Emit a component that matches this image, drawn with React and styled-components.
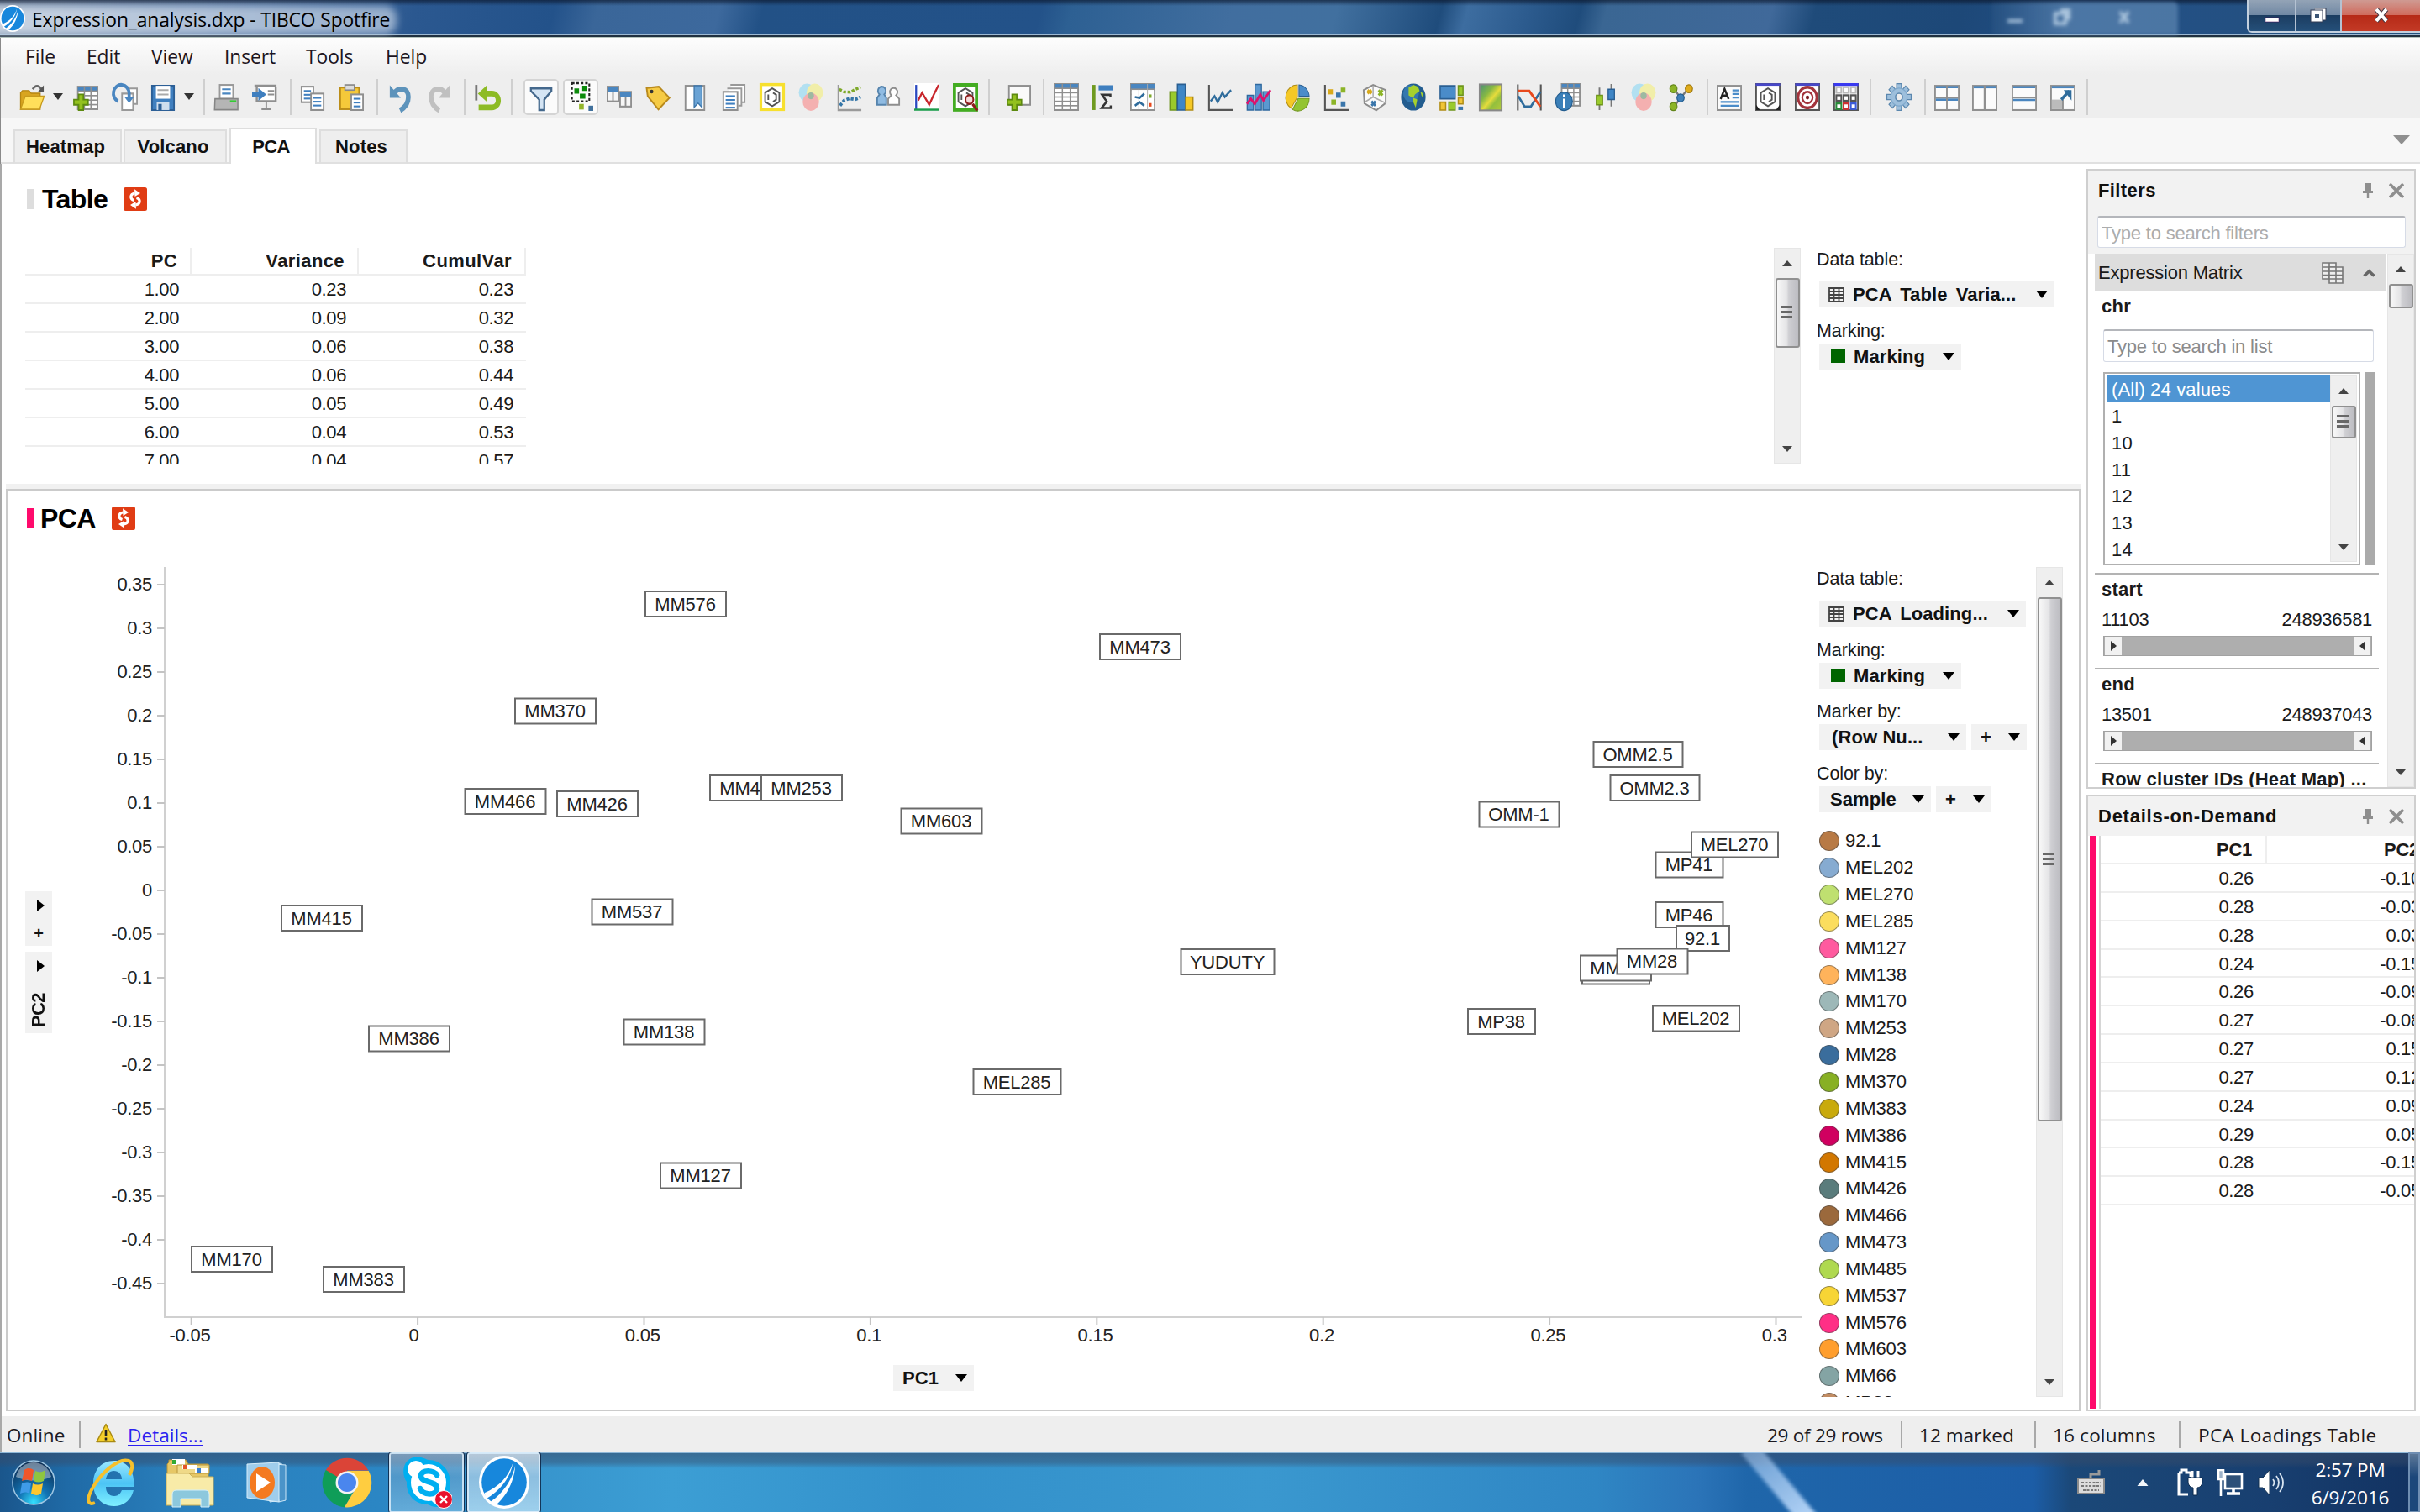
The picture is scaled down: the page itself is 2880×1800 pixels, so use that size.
import React from "react";
import styled, { createGlobalStyle, css } from "styled-components";

const sans = `"Liberation Sans", Arial, sans-serif`;
const ui = `"Open Sans", "Segoe UI", sans-serif`;

const Global = createGlobalStyle`
  * { box-sizing: border-box; }
  html, body { margin: 0; padding: 0; background: #fff; }
  body { font-family: ${sans}; font-size: 22px; color: #1a1a1a; overflow: hidden; }
`;

const Screen = styled.div`
  width: 2880px;
  height: 1800px;
  display: flex;
  flex-direction: column;
  background: #fff;
  overflow: hidden;
`;

/* ---------- title bar ---------- */

const TitleBar = styled.header`
  position: relative;
  flex: none;
  height: 45px;
  display: flex;
  align-items: flex-start;
  overflow: hidden;
  border-bottom: 1px solid #b5c4bd;
  box-shadow: inset 0 -2px 0 #203040, inset 0 -3px 0 #9db9d3;
  background:
    linear-gradient(180deg, rgba(10, 20, 40, 0.65) 0, rgba(10, 20, 40, 0) 7px),
    linear-gradient(105deg, #7f93ad 0, #5b7ba6 240px, #2b5890 480px, #23528a 640px, #3a6699 690px, #3d699d 830px,
      #225186 880px, #235289 1200px, #2d6093 1235px, #416e9f 1420px, #41709f 1540px, #1f4c7c 1660px, #3d6da0 1690px,
      #2c5b8e 1760px, #1f4c7c 1820px, #3a6693 1850px, #40699a 2040px, #1f4b7a 2090px, #1d4878 2260px, #235087 2400px, #245079 2880px);
`;
const TitleGlow = styled.div`
  position: absolute;
  left: -20px;
  top: 7px;
  width: 492px;
  height: 34px;
  border-radius: 14px;
  background: linear-gradient(90deg, rgba(225, 233, 243, 0.75), rgba(190, 206, 226, 0.72));
  filter: blur(5px);
`;
const TitleLabel = styled.div`
  position: relative;
  display: flex;
  align-items: center;
  gap: 8px;
  height: 45px;
  padding-bottom: 1px;
  font: 22.8px/44px ${ui};
  letter-spacing: -0.1px;
  color: #000;
  span { padding-top: 3px; }
`;
const TitleLogo = styled.svg`
  width: 30px;
  height: 32px;
  margin-top: -1px;
`;
const GhostWindow = styled.div`
  position: absolute;
  left: 2370px;
  top: 2px;
  width: 222px;
  height: 40px;
  border-radius: 0 6px 0 0;
  background: linear-gradient(90deg, rgba(90, 130, 170, 0.1), rgba(110, 150, 190, 0.55) 40%);
  filter: blur(2px);
`;
const WindowButtons = styled.div`
  position: relative;
  margin-left: auto;
  display: flex;
  width: 206px;
  height: 39px;
  border: 2px solid #c3d0de;
  border-top: 0;
  border-right: 0;
  border-radius: 0 0 0 6px;
  overflow: hidden;
`;
const WindowButton = styled.div`
  width: ${(p) => p.$w}px;
  display: grid;
  place-items: center;
  border-right: ${(p) => (p.$close ? 0 : "2px solid #b4c2d2")};
  background: ${(p) =>
    p.$close
      ? "linear-gradient(180deg, #cf9a92 0, #d06c5e 48%, #b62a17 50%, #c33a26 100%)"
      : "linear-gradient(180deg, #93a3b6 0, #7189a4 48%, #1c3d61 50%, #25507a 100%)"};
  svg { display: block; }
`;

/* ---------- menu, toolbar, tabs ---------- */

const MenuBar = styled.nav`
  flex: none;
  height: 44px;
  padding-left: 29px;
  display: flex;
  gap: 36px;
  border-left: 1px solid #8a8a8a;
  background: linear-gradient(180deg, #fdfdfd, #eeeeee);
  font: 22.8px/46px ${ui};
  letter-spacing: -0.05px;
  color: #1c1420;
`;
const MenuItem = styled.span`
  width: ${(p) => p.$w}px;
  white-space: nowrap;
`;
const ToolBar = styled.div`
  flex: none;
  height: 52px;
  display: flex;
  align-items: center;
  border-left: 1px solid #8a8a8a;
  background: #eeeeee;
`;
const ToolCell = styled.div`
  flex: none;
  width: ${(p) => (p.$pressed ? 42 : 32)}px;
  height: ${(p) => (p.$pressed ? 43 : 34)}px;
  margin-left: ${(p) => p.$gap ?? 14}px;
  display: grid;
  place-items: center;
  ${(p) =>
    p.$pressed &&
    css`
      background: #fbfbfb;
      border: 2px solid #d4d4d4;
      border-radius: 5px;
    `}
`;
const ToolSvg = styled.svg`
  width: 30px;
  height: 33px;
  overflow: visible;
`;
const ToolArrow = styled.div`
  flex: none;
  width: 12px;
  margin: 0 -1px 0 ${(p) => (p.$gap ?? 10) - 1}px;
  border: 6px solid transparent;
  border-top: 8px solid #333;
  border-bottom: 0;
`;
const ToolSep = styled.div`
  flex: none;
  width: 2px;
  height: 43px;
  margin-left: ${(p) => p.$gap ?? 14}px;
  background: #cfcfcf;
`;
const TabBar = styled.div`
  flex: none;
  height: 54px;
  padding: 0 38px 0 15px;
  display: flex;
  align-items: flex-end;
  gap: 2px;
  border-left: 1px solid #8a8a8a;
  background: #f7f7f7;
  box-shadow: inset 0 -2px 0 #e0e0e0;
`;
const Tab = styled.div`
  width: ${(p) => p.$w}px;
  height: ${(p) => (p.$active ? 43 : 41)}px;
  margin: ${(p) => (p.$active ? "0 1px" : "0")};
  border: 2px solid #dedede;
  border-bottom: ${(p) => (p.$active ? "0" : "2px solid #e0e0e0")};
  background: ${(p) => (p.$active ? "#fff" : "#eeeeee")};
  text-align: center;
  font: bold 22px/37px ${sans};
  letter-spacing: ${(p) => (p.$active ? "-0.6px" : "0.15px")};
  color: #111;
  padding: ${(p) => (p.$active ? 2 : 0)}px 5px 0 0;
`;
const TabMenu = styled.div`
  margin: 0 -26px 23px auto;
  border: 10px solid transparent;
  border-top: 11px solid #8f8f8f;
  border-bottom: 0;
`;

/* ---------- page ---------- */

const Page = styled.main`
  flex: none;
  height: 1491px;
  display: flex;
  gap: 7px;
  border-left: 2px solid #a9a9a9;
  background: #fff;
`;
const LeftPane = styled.div`
  width: 2474px;
  height: 1485px;
  padding-left: 5px;
  display: flex;
  flex-direction: column;
`;
const TablePanel = styled.section`
  height: 381px;
  padding: 28px 0 0 23px;
  overflow: hidden;
`;
const Divider = styled.div`
  height: 6px;
  background: #f1f1f1;
`;
const PlotPanel = styled.section`
  height: 1098px;
  padding: 19px 0 0 21px;
  border: 2px solid #cbcbcb;
  overflow: hidden;
`;
const PanelTitle = styled.div`
  display: flex;
  align-items: center;
  height: 28px;
  padding-left: 2px;
  font: bold 32px/30px ${sans};
  letter-spacing: -0.6px;
  color: #000;
  &::before {
    content: "";
    width: 8px;
    height: 24px;
    margin-right: ${(p) => (p.$active ? 8 : 10)}px;
    background: ${(p) => (p.$active ? "#ff0a6c" : "#dddddd")};
  }
  svg { margin-left: 19px; }
`;
const PanelBody = styled.div`
  display: flex;
  margin-top: 44px;
  height: ${(p) => p.$h}px;
`;
const DataTable = styled.div`
  width: 596px;
  overflow: hidden;
`;
const DataRow = styled.div`
  display: grid;
  grid-template-columns: 198px 199px 199px;
  height: ${(p) => (p.$head ? 33 : 34)}px;
  line-height: ${(p) => (p.$head ? 32 : 33)}px;
  border-bottom: 2px solid #eeeeee;
  font-weight: ${(p) => (p.$head ? "bold" : "normal")};
  span {
    text-align: right;
    padding-right: ${(p) => (p.$head ? 15 : 15)}px;
    border-right: ${(p) => (p.$head ? "2px solid #eeeeee" : "0")};
    letter-spacing: ${(p) => (p.$head ? "0.4px" : "-0.4px")};
  }
`;
const Filler = styled.div`
  flex: 1;
`;

/* ---------- scroll bar ---------- */

const Track = styled.div`
  flex: none;
  width: 32px;
  display: flex;
  flex-direction: column;
  align-items: center;
  background: #efefef;
  border: 1px solid #e6e6e6;
`;
const TrackArrow = styled.div`
  flex: none;
  height: ${(p) => (p.$down ? 34 : 35)}px;
  display: flex;
  align-items: center;
  &::before {
    content: "";
    border: 6.5px solid transparent;
    ${(p) => (p.$down ? "border-top: 7px solid #444; border-bottom: 0;" : "border-bottom: 7px solid #444; border-top: 0;")}
  }
`;
const Thumb = styled.div`
  flex: none;
  width: 29px;
  height: ${(p) => p.$h}px;
  padding-bottom: 2px;
  display: flex;
  flex-direction: column;
  align-items: center;
  justify-content: center;
  gap: 3px;
  border: 2px solid #909090;
  border-radius: 3px;
  background: linear-gradient(90deg, #f8f8f8 0, #e4e4e6 45%, #cfcfd3 55%, #bcbcc1 100%);
  i {
    width: 14px;
    height: 3px;
    margin-right: 2px;
    background: #686868;
  }
`;
function ScrollBar({ thumb, grip = true }) {
  return (
    <Track>
      <TrackArrow />
      <Thumb $h={thumb}>{grip && <><i /><i /><i /></>}</Thumb>
      <Filler />
      <TrackArrow $down />
    </Track>
  );
}

/* ---------- side legend ---------- */

const Side = styled.div`
  width: ${(p) => p.$w}px;
  padding-left: ${(p) => p.$pl}px;
  overflow: hidden;
`;
const SideLabel = styled.div`
  height: 26px;
  margin: ${(p) => (p.$first ? "0 0 14px -3px" : "13.5px 0 3px -3px")};
  line-height: 28px;
  font-size: 21.5px;
  letter-spacing: -0.1px;
`;
const ChipRow = styled.div`
  display: flex;
  gap: 6px;
`;
const Chip = styled.div`
  width: ${(p) => p.$w}px;
  height: 31px;
  padding: 0 8px 0 ${(p) => p.$pad ?? 11}px;
  display: flex;
  align-items: center;
  justify-content: space-between;
  background: #f2f2f2;
  font: bold 22px/31px ${sans};
  letter-spacing: 0.1px;
  word-spacing: ${(p) => p.$ws ?? 0}px;
  color: #111;
  white-space: nowrap;
  span { display: flex; align-items: center; gap: 10px; }
`;
const Caret = styled.div`
  border: 7px solid transparent;
  border-top: 9px solid #000;
  border-bottom: 0;
`;
const Swatch = styled.i`
  width: 17px;
  height: 16px;
  margin-left: 3px;
  background: #006400;
`;
const Legend = styled.div`
  margin-top: 19px;
`;
const LegendRow = styled.div`
  display: flex;
  align-items: center;
  height: 31.85px;
  gap: 7px;
  letter-spacing: -0.1px;
  &::before {
    content: "";
    width: 22px;
    height: 22px;
    border-radius: 50%;
    background: ${(p) => p.$c};
    border: 1px solid rgba(70, 70, 70, 0.55);
  }
`;

/* ---------- chart ---------- */

const PlotArea = styled.div`
  position: relative;
  width: 2115px;
  height: 988px;
  svg { display: block; overflow: visible; }
`;
const AxisChip = styled.div`
  position: absolute;
  left: 1033px;
  top: 950px;
`;
const VerticalChips = styled.div`
  position: absolute;
  left: 0;
  top: 386px;
  width: 32px;
  display: flex;
  flex-direction: column;
  gap: 7px;
`;
const VerticalChip = styled.div`
  height: ${(p) => p.$h}px;
  padding: 10px 0 7px;
  display: flex;
  flex-direction: column;
  align-items: center;
  justify-content: space-between;
  background: #f2f2f2;
  font: bold 22px/24px ${sans};
  color: #111;
  &::before {
    content: "";
    margin-left: 4px;
    border: 7px solid transparent;
    border-left: 9px solid #000;
    border-right: 0;
  }
  span { writing-mode: vertical-rl; transform: rotate(180deg); letter-spacing: -0.5px; }
  b { font-size: 20px; line-height: 16px; }
`;

/* ---------- right panels ---------- */

const RightPane = styled.aside`
  width: 392px;
  padding-top: 6px;
  display: flex;
  flex-direction: column;
  gap: 7px;
`;
const Tool = styled.section`
  height: ${(p) => p.$h}px;
  border: 2px solid #cfcfcf;
  overflow: hidden;
  background: #fff;
`;
const ToolHead = styled.div`
  height: ${(p) => p.$h}px;
  background: #f2f2f2;
`;
const ToolTitle = styled.div`
  display: flex;
  align-items: center;
  justify-content: space-between;
  height: 47px;
  padding: 0 12px;
  font: bold 22px/46px ${sans};
  letter-spacing: ${(p) => p.$ls}px;
  color: #111;
  span { display: flex; gap: 19px; align-items: center; }
`;
const Search = styled.div`
  width: ${(p) => p.$w}px;
  height: ${(p) => p.$h ?? 38}px;
  margin: ${(p) => p.$m};
  padding-left: 4px;
  border: 1px solid #d6dbe6;
  border-top: 2px solid #b4b6bb;
  border-radius: 3px;
  background: #fff;
  font: 22px/37px ${sans};
  letter-spacing: -0.2px;
  color: ${(p) => p.$c};
`;
const FilterBody = styled.div`
  display: flex;
  gap: 2px;
  height: 635px;
  padding-left: 8px;
`;
const FilterList = styled.div`
  width: 346px;
  overflow: hidden;
`;
const GroupHead = styled.div`
  height: 45px;
  padding: 0 12px 0 4px;
  display: flex;
  align-items: center;
  background: #dddddd;
  letter-spacing: -0.2px;
  svg:first-of-type { margin-left: auto; }
  svg + svg { margin-left: 23px; }
`;
const FilterName = styled.div`
  padding-left: 8px;
  height: 36px;
  line-height: 36px;
  font-weight: bold;
  letter-spacing: 0.25px;
  white-space: nowrap;
`;
const ListRow = styled.div`
  display: flex;
  gap: 6px;
  margin: 12px 0 0 10px;
  height: 230px;
`;
const ListBox = styled.div`
  width: 306px;
  padding: 2px;
  display: flex;
  border: 2px solid #b0b0b0;
`;
const ListItems = styled.div`
  width: 266px;
  overflow: hidden;
`;
const ListItem = styled.div`
  height: 31.85px;
  padding-left: 6px;
  line-height: 33px;
  letter-spacing: 0.15px;
  background: ${(p) => (p.$on ? "#4f95d3" : "none")};
  color: ${(p) => (p.$on ? "#fff" : "#1a1a1a")};
`;
const ListSide = styled.div`
  width: 12px;
  background: #aaaaaa;
`;
const FilterRule = styled.div`
  width: 338px;
  height: 2px;
  margin-top: ${(p) => p.$mt}px;
  background: #b3b3b3;
`;
const RangeValues = styled.div`
  display: flex;
  justify-content: space-between;
  width: 330px;
  height: 36px;
  padding-left: 8px;
  line-height: 36px;
  letter-spacing: -0.3px;
`;
const RangeBar = styled.div`
  width: 320px;
  height: 24px;
  margin: 1px 0 0 10px;
  padding: 0 1px;
  display: flex;
  justify-content: space-between;
  border: 1px solid #a2a2a2;
  background: #aeaeae;
`;
const RangeHandle = styled.div`
  width: 20px;
  display: grid;
  place-items: center;
  background: #f1f1f1;
  &::before {
    content: "";
    border: 6px solid transparent;
    ${(p) => (p.$right ? "border-right: 7px solid #333; border-left: 0;" : "border-left: 7px solid #333; border-right: 0;")}
  }
`;
const DetailsBody = styled.div`
  display: flex;
  height: 682px;
  padding-left: 2px;
  &::before {
    content: "";
    width: 8px;
    margin-right: 3px;
    background: #ff0a6c;
  }
`;
const DetailsTable = styled.div`
  flex: 1;
  border-left: 2px solid #d6d6d6;
  overflow: hidden;
`;
const DetailsRow = styled.div`
  display: grid;
  grid-template-columns: 198px 199px;
  height: ${(p) => (p.$head ? 34 : 33.85)}px;
  line-height: 34px;
  border-bottom: 2px solid #eeeeee;
  font-weight: ${(p) => (p.$head ? "bold" : "normal")};
  span {
    text-align: right;
    padding-right: 16px;
    border-right: ${(p) => (p.$head ? "2px solid #eeeeee" : "0")};
    letter-spacing: -0.3px;
  }
`;

/* ---------- status bar ---------- */

const StatusBar = styled.footer`
  flex: none;
  height: 42px;
  padding: 3px 0 0 6px;
  display: flex;
  align-items: center;
  border-left: 2px solid #a9a9a9;
  background: #eeeeee;
  font: 22.6px/39px ${ui};
  color: #1c1a22;
  a { width: 88px; color: #2b1ff0; text-decoration: underline; text-decoration-thickness: 2px; text-underline-offset: 3px; }
  svg { margin: 0 14px 6px 18px; }
`;
const StatusSep = styled.i`
  width: 2px;
  height: 32px;
  margin-bottom: 2px;
  background: #a8a8a8;
`;
const StatusText = styled.span`
  width: ${(p) => p.$w}px;
  padding-left: ${(p) => p.$pl ?? 0}px;
  letter-spacing: ${(p) => p.$ls ?? 0}px;
  white-space: nowrap;
`;

/* ---------- taskbar ---------- */

const TaskBar = styled.div`
  position: relative;
  flex: none;
  height: 72px;
  display: flex;
  align-items: center;
  overflow: hidden;
  border-top: 1px solid #16334f;
  box-shadow: inset 0 1px 0 #8fb8d8;
  background:
    linear-gradient(180deg, rgba(55, 75, 105, 0.6) 0, rgba(55, 75, 105, 0.45) 12px, rgba(55, 75, 105, 0) 19px),
    linear-gradient(90deg, #1a568c 0, #1f6aa6 80px, #2a80bd 220px, #2b86c4 450px, #3795cd 640px, #3c9ed4 800px, #3391cb 1100px,
      #3a98cf 1500px, #2f86c4 1900px, #2b74b8 2020px, #1f66aa 2080px, #1c5da6 2420px, #1b4878 2465px, #183f70 2700px, #123261 2880px);
`;
const Streak = styled.div`
  position: absolute;
  left: 2108px;
  top: -20px;
  width: 22px;
  height: 120px;
  background: linear-gradient(180deg, rgba(170, 205, 245, 0.5), #b9d8fa);
  transform: rotate(-40deg);
  filter: blur(2px);
`;
const TaskIcon = styled.div`
  flex: none;
  width: ${(p) => p.$w}px;
  height: ${(p) => p.$h}px;
  margin-left: ${(p) => p.$gap}px;
  svg { display: block; width: 100%; height: 100%; }
`;
const TaskButton = styled.div`
  flex: none;
  width: ${(p) => p.$w}px;
  height: 72px;
  margin-left: ${(p) => p.$gap}px;
  display: grid;
  place-items: center;
  border: 2px solid rgba(225, 240, 252, 0.8);
  outline: 1px solid rgba(10, 30, 60, 0.8);
  border-radius: 3px;
  background: ${(p) =>
    p.$active
      ? "linear-gradient(180deg, rgba(225,232,240,.75), rgba(170,205,230,.75) 40%, rgba(175,218,242,.85))"
      : "linear-gradient(180deg, rgba(170,190,212,.6), rgba(110,165,205,.55) 40%, rgba(135,195,230,.6))"};
`;
const Tray = styled.div`
  position: relative;
  margin-left: auto;
  display: flex;
  align-items: center;
  height: 72px;
`;
const TrayIcon = styled.svg`
  flex: none;
  margin-right: ${(p) => p.$gap}px;
`;
const Clock = styled.div`
  width: 116px;
  padding-top: 3px;
  text-align: center;
  color: #fff;
  font: 22.6px/33px ${ui};
  letter-spacing: -0.2px;
`;
const ShowDesktop = styled.div`
  width: 14px;
  height: 72px;
  margin-left: 11px;
  border: 2px solid #6f8eb2;
  background: linear-gradient(180deg, #5d7898, #1c477a 40%);
`;

/* ---------- drawings ---------- */

const Refresh = () => (
  <svg width="28" height="28" viewBox="0 0 28 28">
    <rect width="28" height="28" rx="2.500" fill="#e03c14" />
    <path d="M12.500 15.500C7.500 14 7.500 8 13.500 7" fill="none" stroke="#fff" strokeWidth="3.200" />
    <path d="M13 2.200l7 4.800-6.500 4z" fill="#fff" />
    <path d="M15.500 12.500c5 1.500 5 7.500-1 8.500" fill="none" stroke="#fff" strokeWidth="3.200" />
    <path d="M15 25.800l-7-4.800 6.500-4z" fill="#fff" />
  </svg>
);
const MiniTable = () => (
  <svg width="19" height="18" viewBox="0 0 19 18" fill="none" stroke="#444" strokeWidth="1.800">
    <path d="M1 1h17v16H1zM1 5h17M1 9h17M1 13h17M6.500 1v16M12.500 1v16" />
  </svg>
);
const Pin = () => (
  <svg width="12" height="18" viewBox="0 0 12 18" fill="#8e8e8e">
    <path d="M2 0h8v9h2v3H7.200v6H4.800v-6H0V9h2z" />
  </svg>
);
const Close = () => (
  <svg width="18" height="18" viewBox="0 0 18 18" stroke="#8e8e8e" strokeWidth="3.600">
    <path d="M1 1l16 16M17 1L1 17" />
  </svg>
);
const Spotfire = () => (
  <>
    <circle cx="16" cy="16" r="16" fill="#fff" />
    <circle cx="16" cy="16" r="14.300" fill="#1787dc" />
    <path d="M3.500 22.500C13 19 19 12 21.500 4.500 20 13 14 21 4.500 26zM7 28c8-5 14-13 16-22-.5 9-5 18-12.500 24z" fill="#fff" />
  </>
);
const Grid = ({ x = 1, y = 1, w = 14, h = 14, rows = 4, cols = 3, head = "#4a86c0" }) => (
  <>
    <rect x={x} y={y} width={w} height={h} fill="#fff" stroke="#8f8f8f" />
    <rect x={x} y={y} width={w} height={h / (rows + 1)} fill={head} />
    {Array.from({ length: rows }, (_, i) => (
      <path key={i} d={`M${x} ${y + ((i + 1) * h) / (rows + 1)}h${w}`} stroke="#8f8f8f" strokeWidth=".8" />
    ))}
    {Array.from({ length: cols - 1 }, (_, i) => (
      <path key={i} d={`M${x + ((i + 1) * w) / cols} ${y}v${h}`} stroke="#8f8f8f" strokeWidth=".8" />
    ))}
  </>
);
const Plus = ({ x = 0, y = 6 }) => (
  <path transform={`translate(${x} ${y})`} d="M3.500.5h3v3h3v3h-3v3h-3v-3h-3v-3h3z" fill="#93c11f" stroke="#5d8a10" strokeWidth=".9" />
);
const Sheet = ({ x, y, w = 8, h = 10, lines = 3 }) => (
  <>
    <rect x={x} y={y} width={w} height={h} fill="#fff" stroke="#8f8f8f" />
    {Array.from({ length: lines }, (_, i) => (
      <path key={i} d={`M${x + 1.500} ${y + 2.500 + i * 2.200}h${w - 3}`} stroke="#3f7fbf" />
    ))}
  </>
);
const Venn = () => (
  <g opacity=".75">
    <circle cx="5.500" cy="5.500" r="5.200" fill="#9fdcf2" />
    <circle cx="10.500" cy="5.500" r="5.200" fill="#f3ee92" />
    <circle cx="8" cy="10.800" r="5.200" fill="#f79c9c" />
    <circle cx="8" cy="7.300" r="2" fill="#84a888" />
  </g>
);
const Ring = ({ stroke = "#555" }) => (
  <path d="M8 3l4.500 2.500v5.200L8 13.300l-4.500-2.600V5.500zM8.500 5.500l2 1.200v2.800l-2 1.200M5.500 6.500v3.200" fill="none" stroke={stroke} strokeWidth="1" />
);
const Frame = ({ children }) => (
  <>
    <rect x=".5" y="1.500" width="15" height="14" fill="#fbfbfb" stroke="#909090" />
    {children}
  </>
);

const drawings = {
  open: (
    <>
      <path d="M.8 15V5.500L2 4.300h4.200l1.300 1.500h5.700V15z" fill="#d9a520" stroke="#b58512" strokeWidth=".7" />
      <path d="M.8 15l3-7.500h12L12.800 15z" fill="#ffdf5a" stroke="#c79a1c" strokeWidth=".7" />
      <path d="M8.500 3.500c1.500-2.500 4-2.500 5.500 0" fill="none" stroke="#666" strokeWidth="1.300" />
      <path d="M15.500 1.200v4h-4z" fill="#555" />
    </>
  ),
  addTable: (<><Grid x={3} y={2} w={12.500} h={13} rows={4} cols={3} /><Plus x={0} y={6} /></>),
  refreshDocs: (
    <>
      <path d="M9 3h6.500v9H13M6 6h7v9.500H6z" fill="#fff" stroke="#999" />
      <path d="M3.500 10.500A5 5 0 1 1 10.500 5.500V9" fill="none" stroke="#4a86c0" strokeWidth="2" />
      <path d="M7.500 8h6l-3 3.500z" fill="#4a86c0" />
    </>
  ),
  save: (
    <>
      <path d="M1 1.500h14v14H1z" fill="#3f7fbf" stroke="#2c5f96" />
      <rect x="3.500" y="1.500" width="9" height="7.500" fill="#fff" />
      <path d="M4.500 4h7M4.500 6.500h7" stroke="#aaa" />
      <rect x="4" y="11" width="8" height="4.500" fill="#cfdeee" />
      <rect x="5" y="12" width="2.200" height="3.500" fill="#2c5f96" />
    </>
  ),
  print: (
    <>
      <rect x="4" y="1" width="8.500" height="8" fill="#fff" stroke="#999" />
      <path d="M5.500 3.500h5.500M5.500 6h5.500" stroke="#4a86c0" />
      <path d="M1 9h14.500v6.300H.7z" fill="#b5b5b5" stroke="#858585" strokeWidth=".8" />
      <path d="M10.500 10.500h4" stroke="#3c3" strokeWidth="1.200" />
    </>
  ),
  present: (
    <>
      <path d="M1.500 1.500h14M3 2v8.500h12V2" fill="#fff" stroke="#8f8f8f" strokeWidth="1.300" />
      <path d="M9 10.500v4M6 15h6M10 4.500h4M10 6.500h4" stroke="#8f8f8f" />
      <path d="M0 5h4V2.800L9 6.500 4 10.200V8H0z" fill="#3f7fbf" />
    </>
  ),
  copy: (<><Sheet x={1} y={2} w={7.500} h={9} /><Sheet x={7} y={6} w={8} h={9.500} /></>),
  paste: (
    <>
      <rect x="1" y="2.500" width="12" height="12.500" fill="#f5c93a" stroke="#bb8d18" />
      <rect x="4" y="1" width="6" height="3" fill="#ddd" stroke="#888" strokeWidth=".8" />
      <Sheet x={8} y={6.500} w={7.500} h={9} />
    </>
  ),
  undo: (<><path d="M4 5.500C7 2 13 3 12.800 8c0 3.500-2 6-5.300 7.700" fill="none" stroke="#5d93bb" strokeWidth="3" /><path d="M1 1.200v7.300h7z" fill="#5d93bb" /></>),
  redo: (<><path d="M12 5.500C9 2 3 3 3.200 8c0 3.500 2 6 5.300 7.700" fill="none" stroke="#c0c0c0" strokeWidth="3" /><path d="M15 1.200v7.300H8z" fill="#c0c0c0" /></>),
  revert: (
    <>
      <path d="M1.500 1v9" stroke="#777" strokeWidth="1.500" />
      <path d="M5 6h6.500a4 4 0 0 1 0 8H3" fill="none" stroke="#8dbb25" strokeWidth="3.200" />
      <path d="M8.500 1v10L2.500 6z" fill="#8dbb25" />
    </>
  ),
  filter: <path d="M1.500 3h13v1.500L10 9.500v6H6.800v-6L1.500 4.500z" fill="#d5e5f4" stroke="#44688c" strokeWidth="1.200" />,
  marking: (
    <>
      <rect x="2.500" y="0" width="11" height="10.500" fill="none" stroke="#222" strokeWidth="1.100" strokeDasharray="1.600 1.200" />
      <path d="M4 3h3v3H4zM9 1.500h3v3H9zM7.500 6h3.500v3H7.500z" fill="#0b8a0b" />
      <path d="M7 12h3v3.200H7z" fill="#93b52c" /><path d="M13 13h3v3h-3z" fill="#41719c" />
    </>
  ),
  tables: (
    <>
      <rect x=".5" y="2" width="7" height="8.500" fill="#f6f6f6" stroke="#8f8f8f" /><path d="M.5 2h7v3h-7z" fill="#4a86c0" />
      <rect x="8.500" y="5" width="7" height="8.500" fill="#f6f6f6" stroke="#8f8f8f" /><path d="M8.500 5h7v3h-7z" fill="#4a86c0" />
      <path d="M4 5v5.500M12 8v5.500" stroke="#8f8f8f" />
    </>
  ),
  tag: (<><path d="M.8 2.800L1.500 7.500 8.300 15.200 15.300 8.500 8.500 2z" fill="#f6cb45" stroke="#b98a1d" /><circle cx="4" cy="4.800" r="1.100" fill="#333" /></>),
  bookmark: (<><rect x="2" y="1.500" width="12" height="14" fill="#fff" stroke="#8f8f8f" /><path d="M7.500 1.500h5v12.500L10 11.500 7.500 14z" fill="#6aa3d5" stroke="#3d76aa" strokeWidth=".7" /></>),
  docs: (<><path d="M6 1h9v10h-2M4 3h9v10h-2" fill="#fff" stroke="#999" /><Sheet x={1.500} y={5} w={9} h={10.500} lines={4} /></>),
  benzene: (<><rect x=".8" y=".8" width="14.400" height="14.400" fill="#fff" stroke="#f7e02e" strokeWidth="1.700" /><Ring /></>),
  venn: <Venn />,
  dots: (
    <>
      <path d="M1 1v14.500h14.500" fill="none" stroke="#9a9a9a" strokeWidth="1.200" />
      <path d="M1.500 3.500l3 1.500 4 .2 3-1.500 3.500-1.500" fill="none" stroke="#7ea92a" strokeWidth="1.700" strokeDasharray="1.800 1" />
      <path d="M2 13l2.500-3 3.500-1.200 3.500.7 3.500-1.500" fill="none" stroke="#3576a8" strokeWidth="1.900" strokeDasharray="1.800 1" />
    </>
  ),
  people: (
    <>
      <path d="M1 12.500V8.500l1.500-2a2.500 2.500 0 1 1 3 0L6.800 8.500v4z" fill="#8fbbe2" stroke="#5684ad" />
      <path d="M8 12.500V9l2-2a2.400 2.400 0 1 1 3 0l2 2v3.500z" fill="#fff" stroke="#8f8f8f" />
    </>
  ),
  redLine: (<><rect width="16" height="16" y="0" fill="#fff" /><path d="M1.200 1v14.500" stroke="#2a48c0" strokeWidth="1.200" /><path d="M0 15.300h15.500" stroke="#1c9c4c" strokeWidth="1.200" /><path d="M2.500 10L5 5.500l4.500 7 3-6L15.500 1" fill="none" stroke="#c8262c" strokeWidth="1.200" /></>),
  greenSearch: (<><rect x="1" y="1" width="14" height="14.400" fill="#fff" stroke="#43ac22" strokeWidth="2" /><Ring /><circle cx="10.500" cy="9.500" r="2.500" fill="#f5dcdc" stroke="#8d1d1d" strokeWidth="1.100" /><path d="M12.500 12l3 3.800" stroke="#8d1d1d" strokeWidth="1.700" /></>),
  addPage: (<><rect x="2" y="1.500" width="13.500" height="11" fill="#fafafa" stroke="#8f8f8f" /><Plus x={.5} y={6} /></>),
  table: <Grid x={.5} y={.5} w={15} h={15} rows={5} cols={3} />,
  sigma: (<><path d="M.500 1h2v14.500h-2z" fill="#6f9a1f" /><path d="M4.500 1.200h9v3h-9z" fill="#3f7fbf" /><path d="M12 8.200V6.700H6.700L9.700 10.600 6.400 14.300H12.200V12.800" fill="none" stroke="#333" strokeWidth="1.300" /></>),
  graphTable: (
    <>
      <Grid x={.5} y={.5} w={15} h={15} rows={4} cols={1} />
      <path d="M1 4.500h14v10.500H1z" fill="#fff" /><path d="M5.500 3.500v12M11 .5v15" stroke="#aaa" strokeWidth=".5" />
      <path d="M3 8l3 .5L9 6M3 13l3-2 3 2" fill="none" stroke="#2f6c9c" strokeWidth="1.300" />
      <path d="M12 6.500h1.600v2H12z" fill="#7ea92a" /><path d="M12 11.500h1.600v2H12z" fill="#e8491d" />
    </>
  ),
  bars: (<><path d="M.7 5h4.500v10.500H.7z" fill="#9aca2c" stroke="#6f951c" strokeWidth=".8" /><path d="M5.500 .700h5v14.800h-5z" fill="#3f86c6" stroke="#2a5f92" strokeWidth=".8" /><path d="M10.700 8h4.600v7.500h-4.600z" fill="#f5c826" stroke="#b08c14" strokeWidth=".8" /></>),
  line: (<><path d="M1 1v14.500h15" fill="none" stroke="#555" strokeWidth="1.100" /><path d="M2 10.500l2.500-3 2 3.500 3-5.500 1.500 2.500L15 4" fill="none" stroke="#2f6c9c" strokeWidth="1.200" /></>),
  combo: (<><path d="M.7 7h4v8.500h-4zM5.700.7h4v14.800h-4zM10.700 5h4.300v10.500h-4.300z" fill="#5b98d0" stroke="#2f689e" strokeWidth=".7" /><path d="M.5 12L3 9l2.500 3L9 6.500l2 3.500 4.500-6" fill="none" stroke="#e0116b" strokeWidth="1.400" /></>),
  pie: (<><path d="M8 8V1A7.300 7.300 0 0 0 4 14.500z" fill="#f5c826" stroke="#b08c14" strokeWidth=".5" /><path d="M9 7.500V1A7 7 0 0 1 15.500 7.500z" fill="#4a8cc9" stroke="#2a5f92" strokeWidth=".5" /><path d="M8.500 8.800H15.500A7.200 7.200 0 0 1 5 15.200z" fill="#93c431" stroke="#6f951c" strokeWidth=".5" /></>),
  scatter: (<><path d="M1 1v14.500h15" fill="none" stroke="#555" strokeWidth="1.100" /><path d="M3 3.500h3v3H3z" fill="#d8a91a" /><path d="M11 2.500h3v3h-3zM5 9.500h3v3H5z" fill="#8cb427" /><path d="M8 5.500h3v3H8zM11 10.500h3v3h-3z" fill="#3a76ab" /></>),
  cube: (<><path d="M1 4l6-3 8 3v7.500L9 15.700l-7.500-4z" fill="#fafafa" stroke="#8c8c8c" /><path d="M1.500 11l5.500-3 8 3.500M7 8V1.500" fill="none" stroke="#aaa" strokeWidth=".8" /><path d="M3.500 4L6 6M6 4L3.500 6" stroke="#d8a91a" strokeWidth="1.500" /><path d="M10.500 4l2.500 3M13 4l-2.500 3" stroke="#8cb427" strokeWidth="1.500" /><path d="M6 10.500l2.500 2.500M8.500 10.500L6 13" stroke="#3a76ab" strokeWidth="1.500" /></>),
  globe: (<><circle cx="8" cy="8" r="7.800" fill="#235d8f" /><circle cx="6.500" cy="6" r="5" fill="#3f8bc4" opacity=".6" /><path d="M5 2.500L8 1l3 1 1 2.500-3 2-1 2 2.500 1L9.500 14 8 11 7.500 8.500 5 7zM12.500 5l2 1-1 2z" fill="#a5d02d" /></>),
  treemap: (<><path d="M.5 1.500h9.500v7.500H.5z" fill="#4a8cc9" stroke="#2a5f92" strokeWidth=".8" /><path d="M12 1.500h3v5.500h-3zM6 11h4v4.500H6z" fill="#9aca2c" stroke="#6f951c" strokeWidth=".8" /><path d="M12 8.500h3V12h-3zM.5 11H4v4.500H.5z" fill="#f0c537" stroke="#b08c14" strokeWidth=".8" /><path d="M12 13.500h3v2h-3z" fill="#3a76ab" /></>),
  heat: (<><rect x="1" y=".700" width="14" height="15" fill="url(#heatFill)" stroke="#888" /></>),
  parallel: (<><path d="M.7.700v15M15.300.700v15" stroke="#555" strokeWidth="1.100" /><path d="M1 7.500L5 13.500h4L15 5" fill="none" stroke="#2f6c9c" strokeWidth="1.400" /><path d="M1 4.500h7L15 13.500" fill="none" stroke="#e8491d" strokeWidth="1.500" /></>),
  info: (<><Grid x={4} y={.5} w={11.500} h={12.500} rows={4} cols={3} /><circle cx="5.500" cy="10.500" r="5.300" fill="#3a7fb8" stroke="#235d8f" strokeWidth=".6" /><path d="M5.600 9v5M5.600 6.500v1.500" stroke="#fff" strokeWidth="1.600" /></>),
  box: (<><path d="M4 2.500v13M11.500.5v13" stroke="#777" /><path d="M2 7h4v5.500H2z" fill="#9aca2c" stroke="#6f951c" strokeWidth=".7" /><path d="M9.500 3.500h4v6h-4z" fill="#3f86c6" stroke="#2a5f92" strokeWidth=".7" /></>),
  network: (<><path d="M4 3.500l4 5 5-5.500M8 8.500l-4 5" fill="none" stroke="#777" strokeWidth="1.200" /><circle cx="3.500" cy="3.200" r="2.300" fill="#8cb427" stroke="#62851a" strokeWidth=".6" /><circle cx="13.300" cy="3.200" r="2.300" fill="#e0ac1a" stroke="#a07a10" strokeWidth=".6" /><circle cx="8" cy="8.500" r="2.300" fill="#3f7fb8" stroke="#235d8f" strokeWidth=".6" /><circle cx="3.500" cy="13.500" r="2.300" fill="#8cb427" stroke="#62851a" strokeWidth=".6" /></>),
  textArea: (<Frame><path d="M2.500 9.200L5 3.300l2.600 5.900M3.500 7.200h3" fill="none" stroke="#222" strokeWidth="1.300" /><path d="M10 4.200h4M10 6.200h4M10 8.300h4M2.500 10.800h11.500M2.500 13h11.500" stroke="#4a8cc9" strokeWidth="1.100" /></Frame>),
  benzene2: (<><rect x=".5" y=".5" width="15" height="15" fill="#fff" stroke="#555" /><path d="M.2.800h15.600" stroke="#4848c8" strokeWidth="1.400" /><path d="M.5 15.500v-3l2.500 3zM15.500 15.500v-3l-2.500 3z" fill="#222" /><Ring /></>),
  target: (<><rect x=".5" y=".5" width="15" height="15" fill="#fff" stroke="#555" /><path d="M.2.800h15.600" stroke="#4848c8" strokeWidth="1.400" /><circle cx="8" cy="8.300" r="6" fill="none" stroke="#a3343c" strokeWidth="1.600" /><circle cx="8" cy="8.300" r="3.300" fill="none" stroke="#a3343c" strokeWidth="1.200" /><circle cx="8" cy="8.300" r="1.100" fill="#7a1a20" /></>),
  plates: (
    <>
      <rect x=".5" y=".5" width="15" height="15" fill="#fff" stroke="#555" /><path d="M.2.800h15.600" stroke="#3a3af0" strokeWidth="1.600" />
      {[["#bbb", "#bbb", "#bbb"], ["#555", "#555", "#555"], ["#2a8a3a", "#c33", "#3a5ad8"]].map((r, j) =>
        r.map((c, i) => <rect key={`${i}${j}`} x={1.800 + i * 4.600} y={2.300 + j * 4.700} width="3.200" height="3.200" fill="#fff" stroke={c} strokeWidth="1.100" />)
      )}
    </>
  ),
  gear: (
    <>
      <g stroke="#5b87ae" strokeWidth="3.700">
        <path d="M8 0v16M0 8h16M2.500 2.500l11 11M13.500 2.500l-11 11" />
      </g>
      <g stroke="#9dbfdc" strokeWidth="2.400">
        <path d="M8 .600v14.800M.600 8h14.800M2.900 2.900l10.200 10.200M13.100 2.900L2.900 13.100" />
      </g>
      <circle cx="8" cy="8" r="5.200" fill="#9dbfdc" stroke="#7fa8cb" strokeWidth=".6" />
      <circle cx="8" cy="8" r="2.200" fill="#eee" stroke="#5b87ae" strokeWidth=".8" />
    </>
  ),
  layout4: (<Frame><path d="M1 2.300h14M1 9.500h14" stroke="#4a86c0" strokeWidth="1.300" /><path d="M0 8.300h16M8 1.500v14" stroke="#909090" /></Frame>),
  layoutV: (<Frame><path d="M1 2.300h14" stroke="#4a86c0" strokeWidth="1.300" /><path d="M8 1.500v14" stroke="#909090" strokeWidth="1.300" /></Frame>),
  layoutH: (<Frame><path d="M1 2.300h14M1 9.700h14" stroke="#4a86c0" strokeWidth="1.300" /><path d="M0 8.300h16" stroke="#909090" /></Frame>),
  maximize: (<Frame><path d="M1 2.300h14" stroke="#4a86c0" strokeWidth="1.300" /><path d="M1 9.500h7v5.500H1z" fill="#bbb" /><path d="M8 9.500v6" stroke="#909090" /><path d="M7 9.500l5-5" stroke="#2f6c9c" strokeWidth="1.800" /><path d="M8.500 4h5v6z" fill="#2f6c9c" /></Frame>),
};

const tools = [
  ["open", 21], ["^", 10], ["addTable", 12], ["refreshDocs", 15], ["save", 13], ["^", 10], ["|", 12],
  ["print", 9], ["present", 14], ["|", 14], ["copy", 9], ["paste", 14], ["|", 14], ["undo", 11], ["redo", 13], ["|", 14],
  ["revert", 9], ["|", 13], ["filter", 13, true], ["marking", 5, true], ["tables", 9], ["tag"], ["bookmark", 12], ["docs"],
  ["benzene"], ["venn"], ["dots"], ["people"], ["redLine"], ["greenSearch"], ["|", 11], ["addPage", 18], ["|", 13],
  ["table", 10], ["sigma", 13], ["graphTable"], ["bars"], ["line"], ["combo"], ["pie"], ["scatter"], ["cube"], ["globe"],
  ["treemap"], ["heat"], ["parallel"], ["info"], ["box", 13], ["venn", 13], ["network", 12], ["|", 15], ["textArea", 9],
  ["benzene2"], ["target", 15], ["plates"], ["|", 12], ["gear", 17], ["|", 14], ["layout4", 9], ["layoutV", 13],
  ["layoutH", 15], ["maximize"], ["|", 12],
];

/* ---------- data ---------- */

const variance = [
  ["1.00", "0.23", "0.23"], ["2.00", "0.09", "0.32"], ["3.00", "0.06", "0.38"], ["4.00", "0.06", "0.44"],
  ["5.00", "0.05", "0.49"], ["6.00", "0.04", "0.53"], ["7.00", "0.04", "0.57"],
];
const legend = [
  ["92.1", "#b87a45"], ["MEL202", "#86abd1"], ["MEL270", "#bfe070"], ["MEL285", "#fbdd5e"], ["MM127", "#ff5a9f"],
  ["MM138", "#ffb35b"], ["MM170", "#9db8b8"], ["MM253", "#cfa684"], ["MM28", "#3a6d9c"], ["MM370", "#88b024"],
  ["MM383", "#c9aa0c"], ["MM386", "#d00060"], ["MM415", "#d27700"], ["MM426", "#5a7c7c"], ["MM466", "#9b693c"],
  ["MM473", "#6697c8"], ["MM485", "#afd94f"], ["MM537", "#f7d535"], ["MM576", "#ff2f86"], ["MM603", "#ff9e2d"],
  ["MM66", "#84a4a4"], ["MP38", "#c18c62"],
];
const points = [
  ["MM576", 816, 719, 97], ["MM473", 1357, 770, 97], ["MM370", 661, 846.5, 97], ["MM466", 601.5, 954, 97],
  ["MM426", 711, 957, 97], ["MM485", 893, 938, 97], ["MM253", 954, 938, 97], ["MM603", 1120.500, 977.500, 97],
  ["MM537", 752.500, 1085.500, 97], ["MM415", 383, 1093, 97], ["YUDUTY", 1461, 1145, 112], ["MM386", 487, 1236.500, 97],
  ["MM138", 790.500, 1228.500, 97], ["MEL285", 1210.500, 1288, 105], ["MM127", 834, 1399.500, 97], ["MM170", 276, 1499, 97],
  ["MM383", 433, 1523, 97], ["OMM2.5", 1949.500, 898, 107], ["OMM2.3", 1969.500, 938, 107], ["OMM-1", 1808, 969.500, 96],
  ["MP41", 2010.500, 1029.500, 81], ["MEL270", 2064.500, 1005.500, 104], ["MP46", 2010.500, 1089, 81], ["92.1", 2026.500, 1117, 64],
  ["MP65", 1923, 1156.500, 81], ["MM66", 1923, 1152.500, 85], ["MM28", 1966.500, 1144.500, 85], ["MEL202", 2018.500, 1212.500, 104],
  ["MP38", 1787, 1216, 81],
];
const yTicks = ["0.35", "0.3", "0.25", "0.2", "0.15", "0.1", "0.05", "0", "-0.05", "-0.1", "-0.15", "-0.2", "-0.25", "-0.3", "-0.35", "-0.4", "-0.45"];
const xTicks = ["-0.05", "0", "0.05", "0.1", "0.15", "0.2", "0.25", "0.3"];
const details = [
  ["0.26", "-0.10"], ["0.28", "-0.03"], ["0.28", "0.03"], ["0.24", "-0.15"], ["0.26", "-0.09"], ["0.27", "-0.08"],
  ["0.27", "0.15"], ["0.27", "0.12"], ["0.24", "0.09"], ["0.29", "0.05"], ["0.28", "-0.15"], ["0.28", "-0.05"],
];

function PcaPlot() {
  return (
    <svg width="2115" height="940" viewBox="30 675 2115 940" fontFamily={sans} fontSize="22" fill="#222">
      <path d="M196 675V1568H2145" fill="none" stroke="#d0d0d0" strokeWidth="2" />
      {yTicks.map((t, i) => (
        <g key={t}>
          <path d={`M187 ${696 + i * 52}h9`} stroke="#c4c4c4" strokeWidth="2" />
          <text x="181" y={702.700 + i * 52} textAnchor="end" letterSpacing="-.3">{t}</text>
        </g>
      ))}
      {xTicks.map((t, i) => (
        <g key={t}>
          <path d={`M${227.700 + i * 269.400} 1568v9`} stroke="#c4c4c4" strokeWidth="2" />
          <text x={(t === "0" ? 223 : 226) + i * 269.400} y="1596.500" textAnchor="middle" letterSpacing="-.2">{t}</text>
        </g>
      ))}
      {points.map(([name, x, y, w]) => (
        <g key={name}>
          <rect x={x - w / 2 + 0.500} y={y - 15} width={w - 1} height="30" fill="#fff" stroke="#6a6a6a" strokeWidth="2" />
          <text x={x - 0.500} y={y + 7.500} textAnchor="middle" letterSpacing="-.2">{name}</text>
        </g>
      ))}
    </svg>
  );
}

export default function App() {
  return (
    <Screen>
      <Global />
      <TitleBar>
        <TitleGlow />
        <TitleLabel>
          <TitleLogo viewBox="0 0 32 32" preserveAspectRatio="none"><Spotfire /></TitleLogo>
          <span>Expression_analysis.dxp - TIBCO Spotfire</span>
        </TitleLabel>
        <GhostWindow>
          <svg width="222" height="40" viewBox="0 0 222 40" fill="none" stroke="#a9c3dc" strokeWidth="4">
            <path d="M19 23h18M76 14h12v12H76zM82 10h10v12M153 12l10 13M163 12l-10 13" />
          </svg>
        </GhostWindow>
        <WindowButtons>
          <WindowButton $w={57}>
            <svg width="18" height="38"><rect x="1" y="21" width="16" height="5" fill="#fff" stroke="#405" strokeOpacity=".5" /></svg>
          </WindowButton>
          <WindowButton $w={54}>
            <svg width="22" height="38">
              <path d="M6 10h14v14h-4" fill="#fff" stroke="#333c55" />
              <rect x="2" y="12" width="14" height="14" fill="#fff" stroke="#333c55" />
              <rect x="7" y="17" width="5" height="4" fill="#3c5575" />
            </svg>
          </WindowButton>
          <WindowButton $w={93} $close>
            <svg width="20" height="38">
              <path d="M4 11l12 14M16 11L4 25" stroke="#4a3a44" strokeWidth="6" />
              <path d="M4 11l12 14M16 11L4 25" stroke="#fff" strokeWidth="4" />
            </svg>
          </WindowButton>
        </WindowButtons>
      </TitleBar>

      <MenuBar>
        <MenuItem $w={37}>File</MenuItem>
        <MenuItem $w={41}>Edit</MenuItem>
        <MenuItem $w={51}>View</MenuItem>
        <MenuItem $w={61}>Insert</MenuItem>
        <MenuItem $w={59}>Tools</MenuItem>
        <MenuItem $w={60}>Help</MenuItem>
      </MenuBar>

      <ToolBar>
        <svg width="0" height="0">
          <linearGradient id="heatFill" x1="0" y1="0" x2="1" y2="1">
            <stop offset="0" stopColor="#4a9078" /><stop offset=".35" stopColor="#86b844" />
            <stop offset=".55" stopColor="#e6dc3c" /><stop offset=".7" stopColor="#93bf3e" /><stop offset="1" stopColor="#b5ca3a" />
          </linearGradient>
        </svg>
        {tools.map(([name, gap, pressed], i) =>
          name === "|" ? <ToolSep key={i} $gap={gap} /> : name === "^" ? <ToolArrow key={i} $gap={gap} /> : (
            <ToolCell key={i} $gap={gap} $pressed={pressed}>
              <ToolSvg viewBox="0 0 16 16" preserveAspectRatio="none">{drawings[name]}</ToolSvg>
            </ToolCell>
          )
        )}
      </ToolBar>

      <TabBar>
        <Tab $w={129}>Heatmap</Tab>
        <Tab $w={123}>Volcano</Tab>
        <Tab $w={104} $active>PCA</Tab>
        <Tab $w={105}>Notes</Tab>
        <TabMenu />
      </TabBar>

      <Page>
        <LeftPane>
          <TablePanel>
            <PanelTitle>Table<Refresh /></PanelTitle>
            <PanelBody $h={257}>
              <DataTable>
                <DataRow $head><span>PC</span><span>Variance</span><span>CumulVar</span></DataRow>
                {variance.map((r) => (
                  <DataRow key={r[0]}>{r.map((v, i) => <span key={i}>{v}</span>)}</DataRow>
                ))}
              </DataTable>
              <Filler />
              <ScrollBar thumb={83} />
              <Side $w={333} $pl={22}>
                <SideLabel $first>Data table:</SideLabel>
                <Chip $w={280} $ws={4}><span><MiniTable />PCA Table Varia...</span><Caret /></Chip>
                <SideLabel>Marking:</SideLabel>
                <Chip $w={169}><span><Swatch />Marking</span><Caret /></Chip>
              </Side>
            </PanelBody>
          </TablePanel>
          <Divider />
          <PlotPanel>
            <PanelTitle $active>PCA<Refresh /></PanelTitle>
            <PanelBody $h={988}>
              <PlotArea>
                <PcaPlot />
                <VerticalChips>
                  <VerticalChip $h={65}><b>+</b></VerticalChip>
                  <VerticalChip $h={97}><span>PC2</span></VerticalChip>
                </VerticalChips>
                <AxisChip><Chip $w={96}><span>PC1</span><Caret /></Chip></AxisChip>
              </PlotArea>
              <Side $w={278} $pl={20}>
                <SideLabel $first>Data table:</SideLabel>
                <Chip $w={246} $ws={4}><span><MiniTable />PCA Loading...</span><Caret /></Chip>
                <SideLabel>Marking:</SideLabel>
                <Chip $w={169}><span><Swatch />Marking</span><Caret /></Chip>
                <SideLabel>Marker by:</SideLabel>
                <ChipRow>
                  <Chip $w={175} $pad={15}><span>(Row Nu...</span><Caret /></Chip>
                  <Chip $w={66}><span>+</span><Caret /></Chip>
                </ChipRow>
                <SideLabel>Color by:</SideLabel>
                <ChipRow>
                  <Chip $w={133} $pad={13}><span>Sample</span><Caret /></Chip>
                  <Chip $w={66}><span>+</span><Caret /></Chip>
                </ChipRow>
                <Legend>
                  {legend.map(([name, c]) => <LegendRow key={name} $c={c}>{name}</LegendRow>)}
                </Legend>
              </Side>
              <ScrollBar thumb={624} />
            </PanelBody>
          </PlotPanel>
        </LeftPane>

        <RightPane>
          <Tool $h={738}>
            <ToolHead $h={99}>
              <ToolTitle $ls={0.400}>Filters<span><Pin /><Close /></span></ToolTitle>
              <Search $w={367} $m="7px 0 0 11px" $c="#acacac">Type to search filters</Search>
            </ToolHead>
            <FilterBody>
              <FilterList>
                <GroupHead>
                  Expression Matrix
                  <svg width="26" height="26" viewBox="0 0 26 26" fill="#eee" stroke="#777" strokeWidth="1.600">
                    <path d="M1 1h16v19H1zM1 6h16M1 11h16M1 15.500h16M9 1v19" />
                    <path d="M9 6h16v19H9zM9 11h16M9 15.500h16M9 20h16M17 6v19" />
                  </svg>
                  <svg width="15" height="10" viewBox="0 0 15 10" fill="none" stroke="#666" strokeWidth="3.600"><path d="M1.500 8.500l6-5.500 6 5.500" /></svg>
                </GroupHead>
                <FilterName>chr</FilterName>
                <Search $w={322} $h={39} $m="9px 0 0 10px" $c="#8b8b8b">Type to search in list</Search>
                <ListRow>
                  <ListBox>
                    <ListItems>
                      <ListItem $on>(All) 24 values</ListItem>
                      {["1", "10", "11", "12", "13", "14"].map((v) => <ListItem key={v}>{v}</ListItem>)}
                    </ListItems>
                    <ScrollBar thumb={39} />
                  </ListBox>
                  <ListSide />
                </ListRow>
                <FilterRule $mt={9} />
                <FilterName>start</FilterName>
                <RangeValues><span>11103</span><span>248936581</span></RangeValues>
                <RangeBar><RangeHandle /><RangeHandle $right /></RangeBar>
                <FilterRule $mt={14} />
                <FilterName>end</FilterName>
                <RangeValues><span>13501</span><span>248937043</span></RangeValues>
                <RangeBar><RangeHandle /><RangeHandle $right /></RangeBar>
                <FilterRule $mt={14} />
                <FilterName>Row cluster IDs (Heat Map) ...</FilterName>
              </FilterList>
              <ScrollBar thumb={29} grip={false} />
            </FilterBody>
          </Tool>
          <Tool $h={734}>
            <ToolHead $h={47}>
              <ToolTitle $ls={0.750}>Details-on-Demand<span><Pin /><Close /></span></ToolTitle>
            </ToolHead>
            <DetailsBody>
              <DetailsTable>
                <DetailsRow $head><span>PC1</span><span>PC2</span></DetailsRow>
                {details.map((r, i) => <DetailsRow key={i}><span>{r[0]}</span><span>{r[1]}</span></DetailsRow>)}
              </DetailsTable>
            </DetailsBody>
          </Tool>
        </RightPane>
      </Page>

      <StatusBar>
        <StatusText $w={86}>Online</StatusText>
        <StatusSep />
        <svg width="24" height="24" viewBox="0 0 24 24">
          <path d="M12 1.500L23 22.500H1z" fill="#f4cf2a" stroke="#a98a12" strokeWidth="1.500" strokeLinejoin="round" />
          <path d="M12 8v7.500M12 17.500v3" stroke="#222" strokeWidth="2.600" />
        </svg>
        <a>Details...</a>
        <Filler />
        <StatusText $w={159} $ls={-0.300}>29 of 29 rows</StatusText>
        <StatusSep />
        <StatusText $w={157} $pl={20}>12 marked</StatusText>
        <StatusSep />
        <StatusText $w={170} $pl={20} $ls={0.150}>16 columns</StatusText>
        <StatusSep />
        <StatusText $w={285} $pl={21} $ls={0.400}>PCA Loadings Table</StatusText>
      </StatusBar>

      <TaskBar>
        <Streak />
        <TaskIcon $w={52} $h={54} $gap={14}>
          <svg viewBox="0 0 52 54" preserveAspectRatio="none">
            <defs>
              <radialGradient id="orb" cx=".5" cy=".95" r=".9">
                <stop offset="0" stopColor="#35e0ff" /><stop offset=".4" stopColor="#1274b4" /><stop offset="1" stopColor="#0d2f56" />
              </radialGradient>
            </defs>
            <ellipse cx="26" cy="27" rx="25" ry="26" fill="url(#orb)" stroke="#9fc6e2" strokeWidth="1.500" />
            <path d="M5 20C8 8 18 3 26 3s18 5 21 17c-12 6-30 6-42 0z" fill="#fff" opacity=".4" />
            <path d="M15 12c4-3 8-2 11 0l-2 13c-4-2-8-2-12 0z" fill="#f0562b" />
            <path d="M28 13c4 2 8 2 12-1l-2 13c-4 2-8 2-12 0z" fill="#8fc63f" />
            <path d="M12 28c4-2 8-2 11 0l-2 12c-3-2-7-2-11 0z" fill="#3f9be8" />
            <path d="M25 28c4 2 8 2 12 0l-2 12c-4 3-8 2-12 0z" fill="#fdc72e" />
          </svg>
        </TaskIcon>
        <TaskIcon $w={58} $h={60} $gap={37}>
          <svg viewBox="0 0 58 60" preserveAspectRatio="none">
            <defs>
              <linearGradient id="ie" x1="0" y1="0" x2="0" y2="1">
                <stop offset="0" stopColor="#9be8ff" /><stop offset=".5" stopColor="#4cc4f5" /><stop offset="1" stopColor="#7ff0ff" />
              </linearGradient>
            </defs>
            <path fillRule="evenodd" fill="url(#ie)" d="M33 4C18 4 8 15 8 31s10 27 25 27c11 0 20-7 23-19H42c-2 5-5 7-9 7-6 0-10-4-10-11h33C58 16 48 4 33 4zM23 26c1-6 4-10 9.500-10S42 20 42 26z" />
            <path d="M10 54C0 58 0 48 8 35 18 18 38 0 50 4c6 2 5 10 1 17" fill="none" stroke="#f6c02c" strokeWidth="4" />
          </svg>
        </TaskIcon>
        <TaskIcon $w={60} $h={60} $gap={35}>
          <svg viewBox="0 0 60 60" preserveAspectRatio="none">
            <path d="M5 6V3h20l3 5h24v48H3V8z" fill="#e6c766" stroke="#b8953a" />
            <rect x="9" y="2" width="15" height="7" fill="#fff" /><rect x="9" y="3" width="5" height="5" fill="#3a3" />
            <path d="M15 9h38v10H15z" fill="#efd988" stroke="#b8953a" /><rect x="21" y="9" width="17" height="5" fill="#fff" /><rect x="22" y="9" width="5" height="5" fill="#e5562a" />
            <rect x="36" y="13" width="16" height="6" fill="#fff" /><rect x="38" y="13" width="5" height="5" fill="#3a7fd0" />
            <path d="M2 19h27l4 4h25v34H2z" fill="#f8eba8" stroke="#cbb057" />
            <path d="M9 59V44q0-5 5-5h34q5 0 5 5v15H43V49H19v10z" fill="#8cc8dd" stroke="#d5f0fa" />
          </svg>
        </TaskIcon>
        <TaskIcon $w={54} $h={50} $gap={37}>
          <svg viewBox="0 0 54 50" preserveAspectRatio="none">
            <path d="M28 4l14-2v44l-14 2z" fill="#7db9e2" stroke="#cfe8f8" /><path d="M34 3l13 1v42l-8 2z" fill="#4b94c9" stroke="#cfe8f8" />
            <path d="M1 3l38-2v47L1 43z" fill="#9fcdec" stroke="#d8eefa" />
            <ellipse cx="19" cy="25" rx="15" ry="19" fill="#f47a20" /><path d="M12 14l17 11-17 11z" fill="#fff" />
          </svg>
        </TaskIcon>
        <TaskIcon $w={60} $h={60} $gap={36}>
          <svg viewBox="0 0 60 60" preserveAspectRatio="none">
            <path d="M30 30L4.500 15.500A29.400 29.400 0 0 1 55.500 15.500H30z" fill="#db4437" />
            <path d="M30 30L4.800 15A29.400 29.400 0 0 0 27 59.300L40 36z" fill="#0f9d58" />
            <path d="M30 16H55.700A29.400 29.400 0 0 1 27 59.300L42 34z" fill="#ffcd40" />
            <circle cx="30" cy="30" r="13.500" fill="#f4f4f4" /><circle cx="30" cy="30" r="11" fill="#4a86ee" />
          </svg>
        </TaskIcon>
        <TaskButton $w={89} $gap={20}>
          <svg width="60" height="62" viewBox="0 0 60 62">
            <path d="M14 1C23-1 28 3 32 4c14 0 26 12 26 27 0 3 0 5-1 7 2 10-2 21-15 22-5 0-8-2-11-3C16 57 5 46 6 30 0 22 0 5 14 1z" fill="#00aff0" />
            <ellipse cx="32" cy="31" rx="21" ry="22" fill="#fff" /><circle cx="17" cy="15" r="10" fill="#fff" /><circle cx="44" cy="47" r="10" fill="#fff" />
            <path d="M42 22c-3-6-19-7-19 1 0 9 19 5 19 15 0 9-17 8-20 0" fill="none" stroke="#00aff0" strokeWidth="6.500" strokeLinecap="round" />
            <circle cx="50" cy="51" r="10.500" fill="#e8112d" stroke="#fff" />
            <path d="M46 47l8 8M54 47l-8 8" stroke="#fff" strokeWidth="2.400" />
          </svg>
        </TaskButton>
        <TaskButton $w={87} $gap={4} $active>
          <svg width="60" height="63" viewBox="0 0 32 32" preserveAspectRatio="none"><Spotfire /></svg>
        </TaskButton>
        <Tray>
          <TrayIcon $gap={37} width="34" height="32" viewBox="0 0 34 32">
            <path d="M16 12V6h10V1" fill="none" stroke="#9a9a9a" strokeWidth="3" />
            <rect x="1" y="11" width="31" height="18" fill="#dcdcdc" stroke="#8c8c8c" strokeWidth="2" />
            <path d="M5 16h23M5 20h23M7 25h19" stroke="#777" strokeWidth="2.200" strokeDasharray="3 1.500" />
          </TrayIcon>
          <TrayIcon $gap={33} width="14" height="8" viewBox="0 0 14 8"><path d="M7 0l6.500 8H.5z" fill="#f2f6fa" /></TrayIcon>
          <TrayIcon $gap={16} width="32" height="34" viewBox="0 0 32 34">
            <path d="M3 5h3V2h6v3h5v5M14 31H3V5" fill="none" stroke="#fff" strokeWidth="3" />
            <path d="M19 3v8M26 3v8" stroke="#fff" strokeWidth="3" />
            <path d="M14 11h17v5c0 4-3 7-6 7v9h-5v-9c-3 0-6-3-6-7z" fill="#fff" stroke="#0d2a4c" />
          </TrayIcon>
          <TrayIcon $gap={17} width="32" height="32" viewBox="0 0 32 32">
            <path d="M2 1h6v11H2zM5 12v20" fill="#9db2c8" stroke="#fff" strokeWidth="2.600" />
            <rect x="10" y="6" width="20" height="17" fill="#2d5078" stroke="#fff" strokeWidth="2.600" />
            <path d="M20 23v5M12 29h16" stroke="#fff" strokeWidth="3.600" />
          </TrayIcon>
          <TrayIcon $gap={20} width="32" height="34" viewBox="0 0 32 34">
            <path d="M1 11h5l8-9v30l-8-9H1z" fill="#fff" stroke="#12304f" />
            <path d="M18 13q3 4 0 8M22 9q6 8 0 16M26 6q8 11 0 22" fill="none" stroke="#d8e4f0" strokeWidth="1.800" />
          </TrayIcon>
          <Clock>2:57 PM<br />6/9/2016</Clock>
          <ShowDesktop />
        </Tray>
      </TaskBar>
    </Screen>
  );
}
